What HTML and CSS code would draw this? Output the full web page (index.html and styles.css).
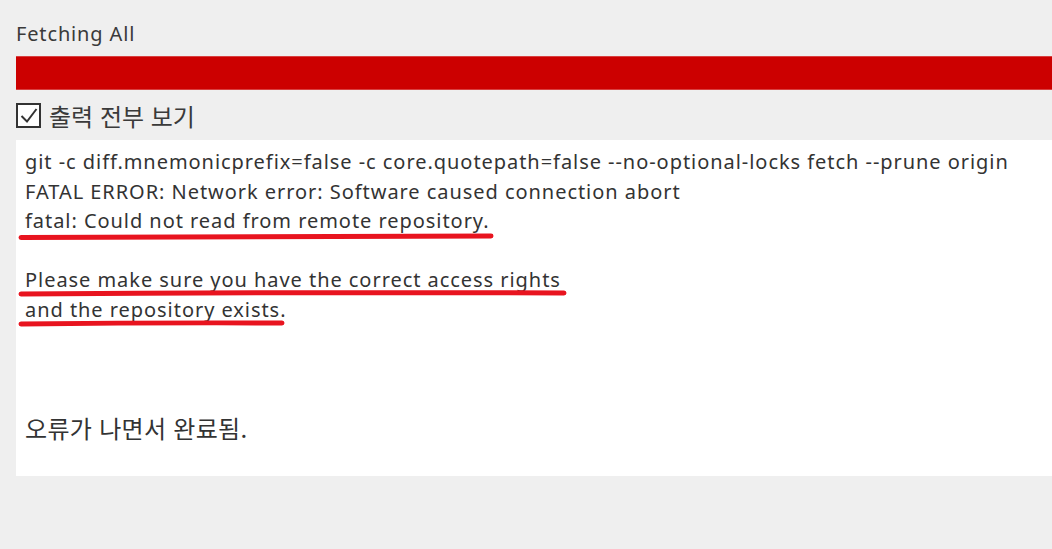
FILE: index.html
```html
<!DOCTYPE html>
<html lang="ko">
<head>
    <meta charset="UTF-8">
    <title>Fetching All</title>
    <link rel="stylesheet" href="styles.css">
</head>
<body>
    <div class="dialog">
        <div class="title">Fetching All</div>
        <div class="progress"></div>
        <label class="toggle">
            <span class="check">
                <svg width="21" height="21" viewBox="0 0 21 21"><path d="M3.5 11 L9 16.5 L18.5 4" fill="none" stroke="#333" stroke-width="2"/></svg>
            </span>
            <span class="toggle-text">출력 전부 보기</span>
        </label>
        <div class="output">git -c diff.mnemonicprefix=false -c core.quotepath=false --no-optional-locks fetch --prune origin
FATAL ERROR: Network error: Software caused connection abort
fatal: Could not read from remote repository.

Please make sure you have the correct access rights
and the repository exists.



<span class="ko">오류가 나면서 완료됨.</span></div>
    </div>

    <!-- hand-drawn marks over the log -->
    <svg class="marks" width="1052" height="549" viewBox="0 0 1052 549">
        <g fill="none" stroke="#e8141f" stroke-width="5" stroke-linecap="round">
            <path d="M21 237.5 Q250 236 491 236"/>
            <path d="M21 294 Q300 292 564 293"/>
            <path d="M21 324 Q150 322.5 282 323"/>
        </g>
    </svg>
</body>
</html>
```

FILE: styles.css
```css
* {
    margin: 0;
    padding: 0;
    box-sizing: border-box;
}

body {
    position: relative;
    width: 1052px;
    height: 549px;
    overflow: hidden;
    background-color: #efefef;
    font-family: "Noto Sans", "Noto Sans CJK KR", sans-serif;
    color: #333;
}

.dialog {
    display: flex;
    flex-direction: column;
    padding: 20px 0 0 16px;
}

.title {
    font-size: 20px;
    line-height: 28px;
    letter-spacing: 0.85px;
    color: #3a3a3a;
}

.progress {
    height: 34px;
    margin-top: 8px;
    background-color: #cc0000;
    border-top: 1px solid #d84040;
    border-bottom: 1px solid #d84040;
}

.toggle {
    display: flex;
    align-items: center;
    gap: 8px;
    margin-top: 13px;
    height: 25px;
}

.check {
    display: flex;
    align-items: center;
    justify-content: center;
    width: 25px;
    height: 25px;
    border: 2px solid #333;
    background-color: #fff;
}

.toggle-text {
    font-family: "Noto Sans CJK KR", sans-serif;
    font-size: 24px;
    color: #3a3a3a;
}

.output {
    margin-top: 12px;
    height: 336px;
    padding: 7px 9px;
    background-color: #fff;
    white-space: pre;
    font-size: 20px;
    line-height: 29.5px;
    letter-spacing: 0.95px;
}

.ko {
    font-family: "Noto Sans CJK KR", sans-serif;
    font-size: 24px;
    letter-spacing: 0.3px;
    vertical-align: 2px;
}

.marks {
    position: absolute;
    left: 0;
    top: 0;
    pointer-events: none;
}
```
